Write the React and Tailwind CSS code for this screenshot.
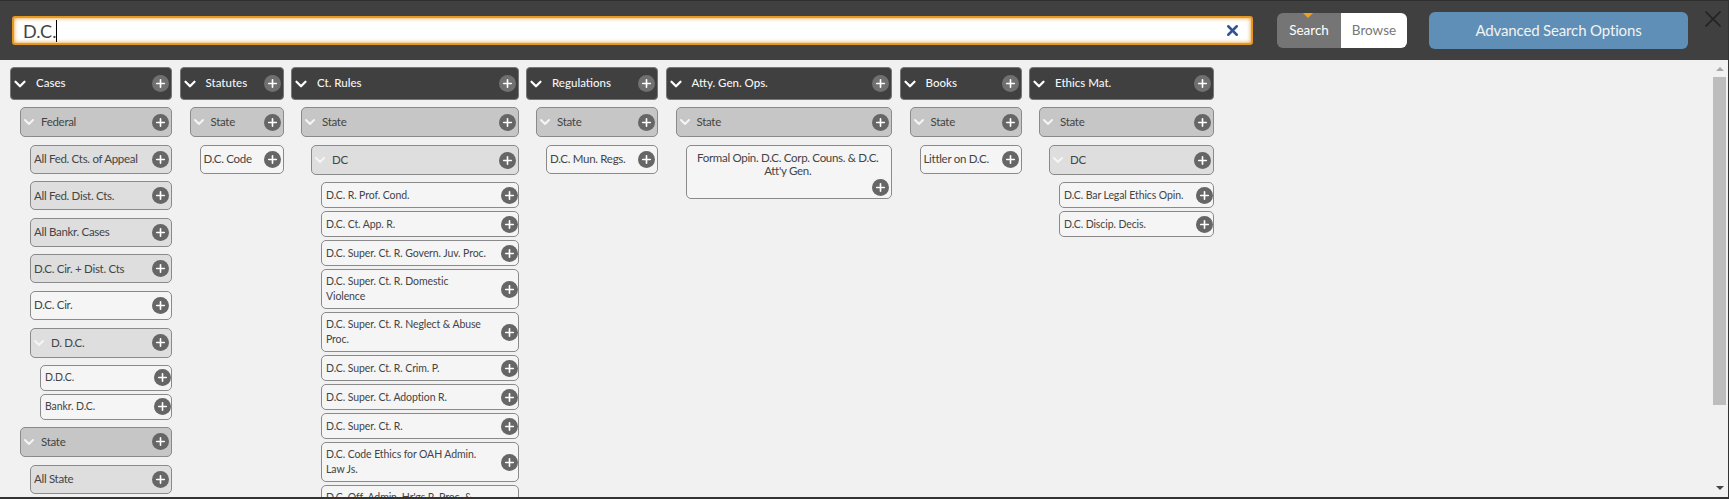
import React from "react";
import { ChevronDown, Plus, X } from "lucide-react";

const COLUMNS = [
  {
    title: "Cases",
    width: "w-[162px]",
    rows: [
      { kind: "group", label: "Federal" },
      { kind: "tall", label: "All Fed. Cts. of Appeal", tone: "grey" },
      { kind: "tall", label: "All Fed. Dist. Cts.", tone: "grey" },
      { kind: "tall", label: "All Bankr. Cases", tone: "grey" },
      { kind: "tall", label: "D.C. Cir. + Dist. Cts", tone: "grey" },
      { kind: "tall", label: "D.C. Cir." },
      { kind: "sub", label: "D. D.C." },
      { kind: "leaf", label: "D.D.C.", first: true },
      { kind: "leaf", label: "Bankr. D.C." },
      { kind: "group", label: "State" },
      { kind: "tall", label: "All State", tone: "grey" },
    ],
  },
  {
    title: "Statutes",
    width: "w-[104px]",
    rows: [
      { kind: "group", label: "State" },
      { kind: "tall", label: "D.C. Code" },
    ],
  },
  {
    title: "Ct. Rules",
    width: "w-[227.5px]",
    rows: [
      { kind: "group", label: "State" },
      { kind: "sub", label: "DC" },
      { kind: "leaf", label: "D.C. R. Prof. Cond.", first: true },
      { kind: "leaf", label: "D.C. Ct. App. R." },
      { kind: "leaf", label: "D.C. Super. Ct. R. Govern. Juv. Proc." },
      { kind: "leaf", label: "D.C. Super. Ct. R. Domestic Violence", wrap: true, pad: "pr-[30px]" },
      { kind: "leaf", label: "D.C. Super. Ct. R. Neglect & Abuse Proc.", wrap: true },
      { kind: "leaf", label: "D.C. Super. Ct. R. Crim. P." },
      { kind: "leaf", label: "D.C. Super. Ct. Adoption R." },
      { kind: "leaf", label: "D.C. Super. Ct. R." },
      { kind: "leaf", label: "D.C. Code Ethics for OAH Admin. Law Js.", wrap: true, pad: "pr-[20px]" },
      { kind: "leaf", label: "D.C. Off. Admin. Hr'gs R. Proc. & Prac.", wrap: true },
    ],
  },
  {
    title: "Regulations",
    width: "w-[132px]",
    rows: [
      { kind: "group", label: "State" },
      { kind: "tall", label: "D.C. Mun. Regs." },
    ],
  },
  {
    title: "Atty. Gen. Ops.",
    width: "w-[226.5px]",
    rows: [
      { kind: "group", label: "State" },
      { kind: "note", label: "Formal Opin. D.C. Corp. Couns. & D.C. Att'y Gen." },
    ],
  },
  {
    title: "Books",
    width: "w-[122px]",
    rows: [
      { kind: "group", label: "State" },
      { kind: "tall", label: "Littler on D.C." },
    ],
  },
  {
    title: "Ethics Mat.",
    width: "w-[185px]",
    rows: [
      { kind: "group", label: "State" },
      { kind: "sub", label: "DC" },
      { kind: "leaf", label: "D.C. Bar Legal Ethics Opin.", first: true },
      { kind: "leaf", label: "D.C. Discip. Decis." },
    ],
  },
];

const AddButton = ({ top }) => (
  <span
    className={`flex h-[17px] w-[17px] shrink-0 items-center justify-center rounded-full text-white ${
      top ? "bg-[#707070]" : "bg-[#666666]"
    }`}
  >
    <Plus size={13} strokeWidth={3} />
  </span>
);

const Group = ({ label }) => (
  <div className="ml-[10px] mt-[7px] flex h-[30px] items-center rounded-[5px] border border-[#8a8a8a] bg-[#c6c6c6] pr-[2px] text-[11.5px] tracking-[-0.3px] text-[#444]">
    <ChevronDown size={16} strokeWidth={3} className="shrink-0 text-[#f5f5f5]" />
    <span className="ml-[4px] flex-1">{label}</span>
    <AddButton />
  </div>
);

const Sub = ({ label }) => (
  <div className="ml-[20px] mt-[8px] flex h-[30px] items-center rounded-[5px] border border-[#8a8a8a] bg-[#dedede] pr-[2px] text-[11.5px] tracking-[-0.3px] text-[#444]">
    <ChevronDown size={16} strokeWidth={3} className="shrink-0 text-[#f5f5f5]" />
    <span className="ml-[4px] flex-1">{label}</span>
    <AddButton />
  </div>
);

const Tall = ({ label, tone }) => (
  <div className={`ml-[20px] mt-[7.6px] flex h-[29px] items-center rounded-[5px] border border-[#8a8a8a] pl-[3px] pr-[2px] text-[11.5px] tracking-[-0.3px] text-[#444] ${tone === "grey" ? "bg-[#dedede]" : "bg-[#f5f5f5]"}`}>
    <span className="flex-1 truncate pb-[1px]">{label}</span>
    <AddButton />
  </div>
);

const Leaf = ({ label, first, wrap, pad }) => (
  <div className={`ml-[30px] ${first ? "mt-[7px]" : "mt-[3px]"} flex items-center rounded-[5px] border border-[#8a8a8a] bg-[#f5f5f5] pl-[4px] text-[10.5px] leading-[15px] tracking-[-0.1px] text-[#444] ${wrap ? "h-[40px]" : "h-[26px]"}`}>
    <span className={`flex-1 ${wrap ? pad || "pr-[8px]" : "whitespace-nowrap"}`}>{label}</span>
    <AddButton />
  </div>
);

const Note = ({ label }) => (
  <div className="ml-[20px] mt-[7.6px] h-[54px] rounded-[5px] border border-[#8a8a8a] bg-[#f5f5f5] pr-[2px] pt-[5px]">
    <p className="text-center text-[11.5px] leading-[13px] tracking-[-0.3px] text-[#444]">{label}</p>
    <div className="mt-[2px] flex justify-end">
      <AddButton />
    </div>
  </div>
);

const renderRow = (row) => {
  if (row.kind === "group") return <Group key={row.label} {...row} />;
  if (row.kind === "sub") return <Sub key={row.label} {...row} />;
  if (row.kind === "leaf") return <Leaf key={row.label} {...row} />;
  if (row.kind === "note") return <Note key={row.label} {...row} />;
  return <Tall key={row.label} {...row} />;
};

const Column = ({ title, width, rows }) => (
  <div className={`${width} shrink-0`}>
    <div className="flex h-[33px] items-center rounded-[4px] border border-[#777] bg-[#404040] pr-[2px] text-[11.5px] font-medium text-[#f5f5f5]">
      <ChevronDown size={18} strokeWidth={3} className="shrink-0 text-white" />
      <span className="ml-[7px] flex-1 pb-[1px]">{title}</span>
      <AddButton top />
    </div>
    {rows.map(renderRow)}
  </div>
);

const App = () => {
  return (
    <div className="flex h-[499px] w-[1729px] flex-col overflow-hidden border-r border-[#333] bg-[#f1f1f1] font-['Lato',sans-serif]">
      <header className="flex h-[60px] shrink-0 items-start border-t border-[#2e2e2e] bg-[#404040] pl-[12px]">
        <div className="mt-[15px] flex h-[29px] w-[1241px] items-center rounded-[3px] border-2 border-[#e8971e] bg-white pl-[9px] pr-[10px] text-[18px] text-[#444] shadow-[inset_0_0_4px_#e8971e]">
          <span className="border-r border-black leading-[22px]">D.C.</span>
          <span className="flex-1" />
          <X size={17} strokeWidth={3.5} className="text-[#2f5597]" />
        </div>
        <div className="relative ml-[24px] mt-[12px] flex h-[35px] w-[130px] text-[13.5px]">
          <span className="flex w-[64px] items-center justify-center rounded-l-[6px] bg-[#757575] text-white">Search</span>
          <span className="flex flex-1 items-center justify-center rounded-r-[6px] bg-white text-[#777]">Browse</span>
          <span className="absolute left-[26px] top-0 h-0 w-0 border-x-[5px] border-t-[5px] border-x-transparent border-t-[#f0a01e]" />
        </div>
        <button className="ml-[22px] mt-[11px] h-[37px] w-[259px] rounded-[6px] bg-[#5f8fb6] text-[15px] tracking-[-0.15px] text-[#f2f2f2]">
          Advanced Search Options
        </button>
        <X size={28} strokeWidth={1.5} className="ml-[11px] mt-[4px] shrink-0 text-[#222]" />
      </header>
      <main className="flex min-h-0 flex-1">
        <div className="flex min-w-0 flex-1 gap-[7.5px] overflow-hidden pl-[10px] pt-[7px]">
          {COLUMNS.map((col) => (
            <Column key={col.title} {...col} />
          ))}
        </div>
        <aside className="flex w-[15px] shrink-0 flex-col items-center pr-[2px] pt-[7px]">
          <span className="h-0 w-0 border-x-[4px] border-b-[4px] border-x-transparent border-b-[#a8a8a8]" />
          <span className="mt-[6px] h-[328px] w-[13px] bg-[#bdbdbd]" />
          <span className="mb-[7px] mt-auto h-0 w-0 border-x-[4px] border-t-[4px] border-x-transparent border-t-[#444]" />
        </aside>
      </main>
      <div className="h-[2px] shrink-0 bg-[#333]" />
    </div>
  );
};

export default App;
